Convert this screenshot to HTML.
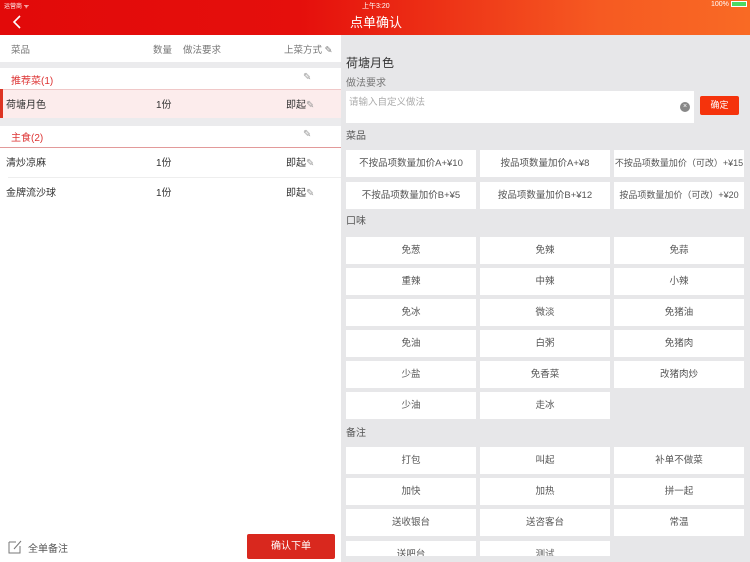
<!DOCTYPE html><html><head><meta charset="utf-8"><style>
*{margin:0;padding:0;box-sizing:border-box}
body{width:750px;height:562px;overflow:hidden;font-family:"Liberation Sans","Noto Sans CJK SC",sans-serif;background:#fff;position:relative;font-size:10px;color:#333}
.a{position:absolute}
#hd{left:0;top:0;width:750px;height:35px;background:linear-gradient(90deg,#e20a0a 0%,#e50f0c 40%,#f65a22 80%,#f96a24 100%)}
.b{position:absolute;background:#fff;width:130px;height:27px;text-align:center;line-height:27px;font-size:9.5px;color:#555}
.l{position:absolute;font-size:10px;color:#555}
</style></head><body>
<div id="hd" class="a"></div>
<div class="a" style="left:4px;top:1px;font-size:6px;color:#fff">运营商 ᯤ</div>
<div class="a" style="left:362px;top:1px;font-size:7px;color:#fff">上午3:20</div>
<div class="a" style="left:711px;top:1px;font-size:7px;color:#fff">100% <span style="display:inline-block;width:16px;height:6px;background:#4cd964;border:1px solid #fff;vertical-align:middle"></span></div>
<svg class="a" style="left:12px;top:15px" width="10" height="14"><path d="M8 1L2 7L8 13" stroke="#fff" stroke-width="1.6" fill="none"/></svg>
<div class="a" style="left:350px;top:12px;font-size:13px;color:#fff">点单确认</div>

<div class="a" style="left:0;top:35px;width:341px;height:527px;background:#fff"></div>
<div class="l" style="left:11px;top:42px;color:#777;font-size:9.5px">菜品</div>
<div class="l" style="left:153px;top:42px;color:#777;font-size:9.5px">数量</div>
<div class="l" style="left:183px;top:42px;color:#777;font-size:9.5px">做法要求</div>
<div class="l" style="left:284px;top:42px;color:#777;font-size:9.5px">上菜方式 ✎</div>
<div class="a" style="left:0;top:62px;width:341px;height:6px;background:#ebebed"></div>
<div class="l" style="left:11px;top:72px;color:#d33">推荐菜(1)</div>
<div class="l" style="left:303px;top:72px;color:#999">✎</div>
<div class="a" style="left:0;top:89px;width:341px;height:29px;background:#fcecec;border-top:1px solid #f0c8c8"></div>
<div class="a" style="left:0;top:89px;width:3px;height:29px;background:#d32"></div>
<div class="l" style="left:6px;top:96px;color:#333">荷塘月色</div>
<div class="l" style="left:156px;top:96px;color:#333">1份</div>
<div class="l" style="left:286px;top:96px;color:#333">即起<span style="color:#999">✎</span></div>
<div class="a" style="left:0;top:118px;width:341px;height:8px;background:#ebebed"></div>
<div class="l" style="left:11px;top:129px;color:#d33">主食(2)</div>
<div class="l" style="left:303px;top:129px;color:#999">✎</div>
<div class="a" style="left:0;top:147px;width:341px;height:1px;background:#e29a9a"></div>
<div class="l" style="left:6px;top:154px;color:#333">清炒凉麻</div>
<div class="l" style="left:156px;top:154px;color:#333">1份</div>
<div class="l" style="left:286px;top:154px;color:#333">即起<span style="color:#999">✎</span></div>
<div class="a" style="left:8px;top:177px;width:333px;height:1px;background:#eee"></div>
<div class="l" style="left:6px;top:184px;color:#333">金牌流沙球</div>
<div class="l" style="left:156px;top:184px;color:#333">1份</div>
<div class="l" style="left:286px;top:184px;color:#333">即起<span style="color:#999">✎</span></div>
<svg class="a" style="left:8px;top:539px" width="15" height="15"><path d="M1 3H8M1 3V14H12V7" stroke="#777" fill="none"/><path d="M6 10L13 2" stroke="#777" fill="none"/></svg>
<div class="l" style="left:28px;top:540px;color:#555">全单备注</div>
<div class="a" style="left:247px;top:534px;width:88px;height:25px;background:#d9281e;border-radius:2px;color:#fff;text-align:center;line-height:25px;font-size:10px">确认下单</div>

<div class="a" style="left:341px;top:35px;width:409px;height:527px;background:#e7e7e9"></div>
<div class="l" style="left:346px;top:54px;font-size:12px;color:#333">荷塘月色</div>
<div class="l" style="left:346px;top:74px;color:#777">做法要求</div>
<div class="a" style="left:346px;top:91px;width:348px;height:32px;background:#fff"></div>
<div class="l" style="left:349px;top:94px;color:#aaa;font-size:9.5px">请输入自定义做法</div>
<div class="a" style="left:680px;top:102px;width:10px;height:10px;border-radius:50%;background:#888;color:#fff;font-size:7px;line-height:10px;text-align:center">×</div>
<div class="a" style="left:700px;top:96px;width:39px;height:19px;background:#f5330c;border-radius:2px;color:#fff;font-size:9px;text-align:center;line-height:19px">确定</div>
<div class="l" style="left:346px;top:127px">菜品</div>
<div class="b" style="left:346px;top:150px">不按品项数量加价A+¥10</div>
<div class="b" style="left:480px;top:150px">按品项数量加价A+¥8</div>
<div class="b" style="left:614px;top:150px;font-size:9px">不按品项数量加价（可改）+¥15</div>
<div class="b" style="left:346px;top:182px">不按品项数量加价B+¥5</div>
<div class="b" style="left:480px;top:182px">按品项数量加价B+¥12</div>
<div class="b" style="left:614px;top:182px;font-size:9px">按品项数量加价（可改）+¥20</div>
<div class="l" style="left:346px;top:212px">口味</div>
<div class="b" style="left:346px;top:237px">免葱</div><div class="b" style="left:480px;top:237px">免辣</div><div class="b" style="left:614px;top:237px">免蒜</div>
<div class="b" style="left:346px;top:268px">重辣</div><div class="b" style="left:480px;top:268px">中辣</div><div class="b" style="left:614px;top:268px">小辣</div>
<div class="b" style="left:346px;top:299px">免冰</div><div class="b" style="left:480px;top:299px">微淡</div><div class="b" style="left:614px;top:299px">免猪油</div>
<div class="b" style="left:346px;top:330px">免油</div><div class="b" style="left:480px;top:330px">白粥</div><div class="b" style="left:614px;top:330px">免猪肉</div>
<div class="b" style="left:346px;top:361px">少盐</div><div class="b" style="left:480px;top:361px">免香菜</div><div class="b" style="left:614px;top:361px">改猪肉炒</div>
<div class="b" style="left:346px;top:392px">少油</div><div class="b" style="left:480px;top:392px">走冰</div>
<div class="l" style="left:346px;top:424px">备注</div>
<div class="b" style="left:346px;top:447px">打包</div><div class="b" style="left:480px;top:447px">叫起</div><div class="b" style="left:614px;top:447px">补单不做菜</div>
<div class="b" style="left:346px;top:478px">加快</div><div class="b" style="left:480px;top:478px">加热</div><div class="b" style="left:614px;top:478px">拼一起</div>
<div class="b" style="left:346px;top:509px">送收银台</div><div class="b" style="left:480px;top:509px">送咨客台</div><div class="b" style="left:614px;top:509px">常温</div>
<div class="b" style="left:346px;top:541px;height:15px;overflow:hidden;line-height:27px">送吧台</div><div class="b" style="left:480px;top:541px;height:15px;overflow:hidden;line-height:27px">测试</div>
</body></html>
